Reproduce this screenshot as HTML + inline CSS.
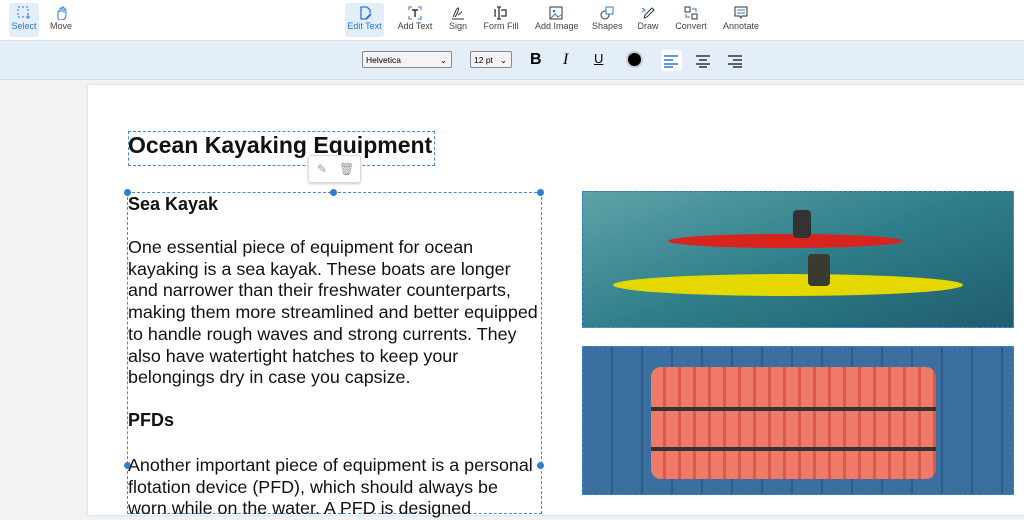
<!DOCTYPE html>
<html><head><style>
body{margin:0;width:1024px;height:504px;overflow:hidden;background:#f1f2f4;font-family:"Liberation Sans",sans-serif;position:relative}
.tb{position:absolute;left:0;top:0;width:1024px;height:40px;background:#fff;border-bottom:1px solid #dfe3e8}
.it{position:absolute;top:3px;height:34px;text-align:center;font-size:9px;color:#444;border-radius:3px;white-space:nowrap}
.it svg{display:block;margin:3px auto 1px}
.act{background:#e3eefb;color:#2b78d4}
.fb{position:absolute;left:0;top:41px;width:1024px;height:38px;background:#e4eef9;border-bottom:1px solid #d6dde6}
.sel{position:absolute;top:10px;height:17px;border:1px solid #888;border-radius:2px;background:#f4f4f4;font-size:8.5px;line-height:17px;padding-left:3px;box-sizing:border-box}
.page{position:absolute;left:88px;top:85px;width:940px;height:430px;background:#fff;box-shadow:0 0 2px #ccc}
.txt{position:absolute;left:128px;color:#111;font-size:17.9px;line-height:21.7px;white-space:nowrap}
.dash{position:absolute;border:1px dashed #3f8ad6}
.h{position:absolute;width:7px;height:7px;border-radius:50%;background:#2d7fd0}
</style></head><body>
<div class="tb">
<div class="it act" style="left:9px;width:30px"><svg width="14" height="14"><rect x="1" y="1" width="10" height="10" fill="none" stroke="#2b78d4" stroke-dasharray="2 2"/><path d="M11 9v4M9 11h4" stroke="#2b78d4"/></svg>Select</div>
<div class="it" style="left:48px;width:26px"><svg width="14" height="14"><path d="M4 12V6a1 1 0 012 0V3a1 1 0 012 0v3V2a1 1 0 012 0v5-3a1 1 0 012 0v5c0 3-2 5-4 5H7c-2 0-3-1-3-2z" fill="none" stroke="#2b78d4"/></svg>Move</div>
<div class="it act" style="left:345px;width:39px"><svg width="14" height="14"><path d="M9 1H3v12h5M9 1l3 3v3" fill="none" stroke="#2b78d4" stroke-width="1.3"/><path d="M8 13l5-5" stroke="#2b78d4" stroke-width="2"/></svg>Edit Text</div>
<div class="it" style="left:397px;width:36px"><svg width="14" height="14"><path d="M1 4V1h3M10 1h3v3M13 10v3h-3M4 13H1v-3" fill="none" stroke="#2b78d4"/><path d="M4 4h6M7 4v7" stroke="#333" stroke-width="1.5"/></svg>Add Text</div>
<div class="it" style="left:448px;width:20px"><svg width="14" height="14"><path d="M2 11c2-3 3-9 5-9S5 10 4 11M7 9c2-1 3-3 4-3M1 13h12" fill="none" stroke="#333"/></svg>Sign</div>
<div class="it" style="left:483px;width:36px"><svg width="14" height="14"><path d="M5 1v12M3 1h4M3 13h4M7 4h5v6H7M2 4H1v6h1" fill="none" stroke="#333" stroke-width="1.3"/></svg>Form Fill</div>
<div class="it" style="left:535px;width:42px"><svg width="14" height="14"><rect x="1" y="1" width="12" height="12" fill="none" stroke="#333"/><path d="M2 12l4-4 3 3 3-2" fill="none" stroke="#2b78d4"/><circle cx="5" cy="5" r="1.3" fill="#2b78d4"/></svg>Add Image</div>
<div class="it" style="left:592px;width:30px"><svg width="14" height="14"><circle cx="5" cy="9" r="4" fill="none" stroke="#333"/><rect x="6" y="1" width="7" height="7" fill="#fff" stroke="#2b78d4"/></svg>Shapes</div>
<div class="it" style="left:637px;width:22px"><svg width="14" height="14"><path d="M3 12l1-3 7-7 2 2-7 7z" fill="none" stroke="#333"/><path d="M1 2l3 2-3 2" fill="none" stroke="#2b78d4"/></svg>Draw</div>
<div class="it" style="left:675px;width:32px"><svg width="14" height="14"><rect x="1" y="1" width="5" height="5" fill="none" stroke="#333"/><rect x="8" y="8" width="5" height="5" fill="none" stroke="#333"/><path d="M8 3h4v3M6 11H2V8" fill="none" stroke="#2b78d4"/></svg>Convert</div>
<div class="it" style="left:723px;width:36px"><svg width="14" height="14"><path d="M1 1h12v9H8l-1 2-1-2H1z" fill="none" stroke="#333"/><path d="M3 4h8M3 7h8" stroke="#2b78d4"/></svg>Annotate</div>
</div>
<div class="fb">
<div class="sel" style="left:362px;width:90px">Helvetica<span style="position:absolute;right:4px">⌄</span></div>
<div class="sel" style="left:470px;width:42px">12 pt<span style="position:absolute;right:4px">⌄</span></div>
<div style="position:absolute;left:530px;top:10px;font-weight:bold;font-size:16px">B</div>
<div style="position:absolute;left:563px;top:10px;font-style:italic;font-size:16px;font-family:'Liberation Serif'">I</div>
<div style="position:absolute;left:594px;top:10px;text-decoration:underline;font-size:13px">U</div>
<div style="position:absolute;left:628px;top:12px;width:13px;height:13px;border-radius:50%;background:#000;box-shadow:0 0 0 2px #ccc"></div>
<div style="position:absolute;left:661px;top:9px;width:21px;height:21px;background:#fff;border-radius:3px"></div>
<svg style="position:absolute;left:664px;top:13px" width="80" height="14"><g stroke="#2b78d4" stroke-width="1.6"><path d="M0 2h14M0 6h9M0 10h14M0 13h9"/></g><g stroke="#333" stroke-width="1.6"><path d="M32 2h14M35 6h8M32 10h14M35 13h8M64 2h14M69 6h9M64 10h14M69 13h9"/></g></svg>
</div>
<div class="page"></div>
<div class="dash" style="left:128px;top:131px;width:305px;height:33px"></div>
<div style="position:absolute;left:128px;top:132px;font-size:23px;font-weight:bold;color:#111;white-space:nowrap">Ocean Kayaking Equipment</div>
<div style="position:absolute;left:308px;top:155px;width:51px;height:26px;background:#fff;border:1px solid #ddd;border-radius:3px;box-shadow:0 1px 2px #ccc;color:#999;font-size:12px;line-height:26px"><span style="margin-left:8px">✎</span><span style="margin-left:12px">🗑</span></div>
<div class="dash" style="left:127px;top:192px;width:413px;height:320px"></div>
<div class="h" style="left:124px;top:189px"></div><div class="h" style="left:330px;top:189px"></div><div class="h" style="left:537px;top:189px"></div>
<div class="h" style="left:124px;top:462px"></div><div class="h" style="left:537px;top:462px"></div>
<div class="txt" style="top:194px;font-weight:bold;font-size:18px">Sea Kayak</div>
<div class="txt" style="top:237px">One essential piece of equipment for ocean<br>kayaking is a sea kayak. These boats are longer<br>and narrower than their freshwater counterparts,<br>making them more streamlined and better equipped<br>to handle rough waves and strong currents. They<br>also have watertight hatches to keep your<br>belongings dry in case you capsize.</div>
<div class="txt" style="top:410px;font-weight:bold;font-size:18px">PFDs</div>
<div class="txt" style="top:455px">Another important piece of equipment is a personal<br>flotation device (PFD), which should always be<br>worn while on the water. A PFD is designed</div>
<div style="position:absolute;left:582px;top:191px;width:432px;height:137px;background:linear-gradient(160deg,#5fa2a8,#2f7f8a 50%,#1f5c6e);border:1px dashed #3f8ad6;box-sizing:border-box">
<div style="position:absolute;left:85px;top:42px;width:235px;height:14px;background:#d8241c;border-radius:50%"></div>
<div style="position:absolute;left:30px;top:82px;width:350px;height:22px;background:#e4d800;border-radius:50%"></div>
<div style="position:absolute;left:210px;top:18px;width:18px;height:28px;background:#333;border-radius:4px"></div>
<div style="position:absolute;left:225px;top:62px;width:22px;height:32px;background:#3a3a2e;border-radius:4px"></div>
</div>
<div style="position:absolute;left:582px;top:346px;width:432px;height:149px;background:repeating-linear-gradient(90deg,#3a6fa0 0 28px,#2d5c8a 28px 30px);border:1px dashed #3f8ad6;box-sizing:border-box">
<div style="position:absolute;left:68px;top:20px;width:285px;height:112px;background:repeating-linear-gradient(90deg,#f07a68 0 12px,#d95a4c 12px 15px);border-radius:10px"></div>
<div style="position:absolute;left:68px;top:60px;width:285px;height:4px;background:#333"></div>
<div style="position:absolute;left:68px;top:100px;width:285px;height:4px;background:#333"></div>
</div>
</body></html>
